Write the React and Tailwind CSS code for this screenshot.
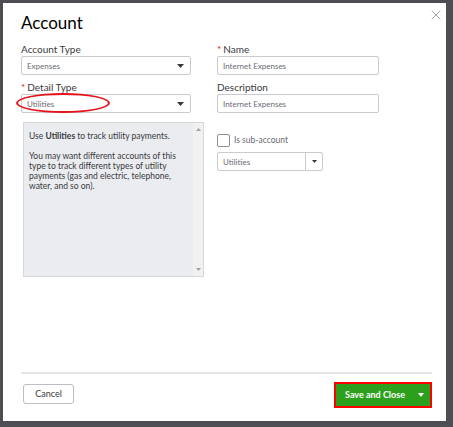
import { X } from 'lucide-react';

const font = { fontFamily: 'Lato, "Open Sans", sans-serif' };

const labelClass = 'block text-[10px] leading-[12px] text-[#393a3d]';
const fieldClass =
  'flex h-[19px] items-center rounded-[2px] border border-[#c9cbd0] bg-white px-[5px] text-[8px] text-[#6b6c72]';

function Caret() {
  return (
    <svg width="7" height="4" viewBox="0 0 7 4" className="fill-[#393a3d]">
      <path d="M0 0h7L3.5 4z" />
    </svg>
  );
}

function SelectBox({ value, className = '' }) {
  return (
    <div className={`${fieldClass} justify-between pr-[6px] ${className}`}>
      <span>{value}</span>
      <Caret />
    </div>
  );
}

function Required() {
  return <span className="mr-[2px] text-[#e1121b]">*</span>;
}

export default function App() {
  return (
    <div className="h-[427px] w-[453px] bg-[#4d4e51] p-[3px]" style={font}>
      <div className="relative flex h-[418px] w-[443px] flex-col bg-white px-[18px] pt-[9px]">
        <button className="absolute right-[2px] top-[4px] text-[#8d9096]">
          <X size={16} strokeWidth={1.2} />
        </button>
        <h1 className="text-[17px] leading-[22px] text-[#000]">Account</h1>

        <div className="mt-[9px] flex gap-[26px]">
          {/* left column */}
          <div className="flex w-[170px] flex-col">
            <span className={labelClass}>Account Type</span>
            <SelectBox value="Expenses" className="mt-[1px]" />
            <span className={`${labelClass} mt-[6px]`}>
              <Required />Detail Type
            </span>
            <div className="relative mt-[1px]">
              <SelectBox value="Utilities" />
              <div className="absolute left-[-5px] top-[-1px] h-[20px] w-[94px] rounded-[50%] border-[2px] border-[#e4131b]" />
            </div>
            <div className="ml-[2px] mt-[9px] flex h-[155px] w-[181px] border border-[#d4d7dc] bg-[#ebecf0]">
              <div className="flex-1 px-[5px] pt-[8px] text-[8.5px] leading-[10px] text-[#393a3d]">
                <p>
                  Use <b className="font-bold">Utilities</b> to track utility payments.
                </p>
                <p className="mt-[10px]">
                  You may want different accounts of this type to track different types of utility
                  payments (gas and electric, telephone, water, and so on).
                </p>
              </div>
              <div className="flex w-[10px] flex-col items-center justify-between bg-[#f1f1f1] py-[5px]">
                <svg width="5" height="3" viewBox="0 0 5 3" className="fill-[#a3a3a3]">
                  <path d="M0 3h5L2.5 0z" />
                </svg>
                <svg width="5" height="3" viewBox="0 0 5 3" className="fill-[#a3a3a3]">
                  <path d="M0 0h5L2.5 3z" />
                </svg>
              </div>
            </div>
          </div>

          {/* right column */}
          <div className="flex w-[162px] flex-col">
            <span className={labelClass}>
              <Required />Name
            </span>
            <div className={`${fieldClass} mt-[1px]`}>Internet Expenses</div>
            <span className={`${labelClass} mt-[6px]`}>Description</span>
            <div className={`${fieldClass} mt-[1px]`}>Internet Expenses</div>
            <label className="mt-[21px] flex items-center gap-[4px] text-[8.5px] text-[#6b6c72]">
              <span className="h-[13px] w-[13px] rounded-[2px] border border-[#8d9096] bg-white" />
              Is sub-account
            </label>
            <div className={`${fieldClass} mt-[5px] w-[106px] pr-0`}>
              <span className="flex-1">Utilities</span>
              <span className="flex h-full w-[17px] items-center justify-center border-l border-[#c9cbd0]">
                <svg width="5" height="3" viewBox="0 0 5 3" className="fill-[#393a3d]">
                  <path d="M0 0h5L2.5 3z" />
                </svg>
              </span>
            </div>
          </div>
        </div>

        <div className="mt-auto mb-[8px] mr-[-4px] border-t-[2px] border-[#e3e5e8]" />
        <div className="mb-[13px] flex items-start justify-between">
          <button className="ml-[2px] mt-[2px] h-[20px] w-[51px] rounded-[3px] border border-[#babec5] text-[9px] text-[#393a3d]">
            Cancel
          </button>
          <div className="mr-[-4px] border-[2px] border-[#ff0000]">
            <div className="flex h-[22px] w-[94px] items-center bg-[#2ca01c] text-white">
              <span className="flex-1 pl-[2px] text-center text-[9px] font-bold">Save and Close</span>
              <span className="flex w-[18px] justify-center">
                <svg width="6" height="4" viewBox="0 0 6 4" className="fill-white">
                  <path d="M0 0h6L3 4z" />
                </svg>
              </span>
            </div>
          </div>
        </div>
      </div>
    </div>
  );
}
